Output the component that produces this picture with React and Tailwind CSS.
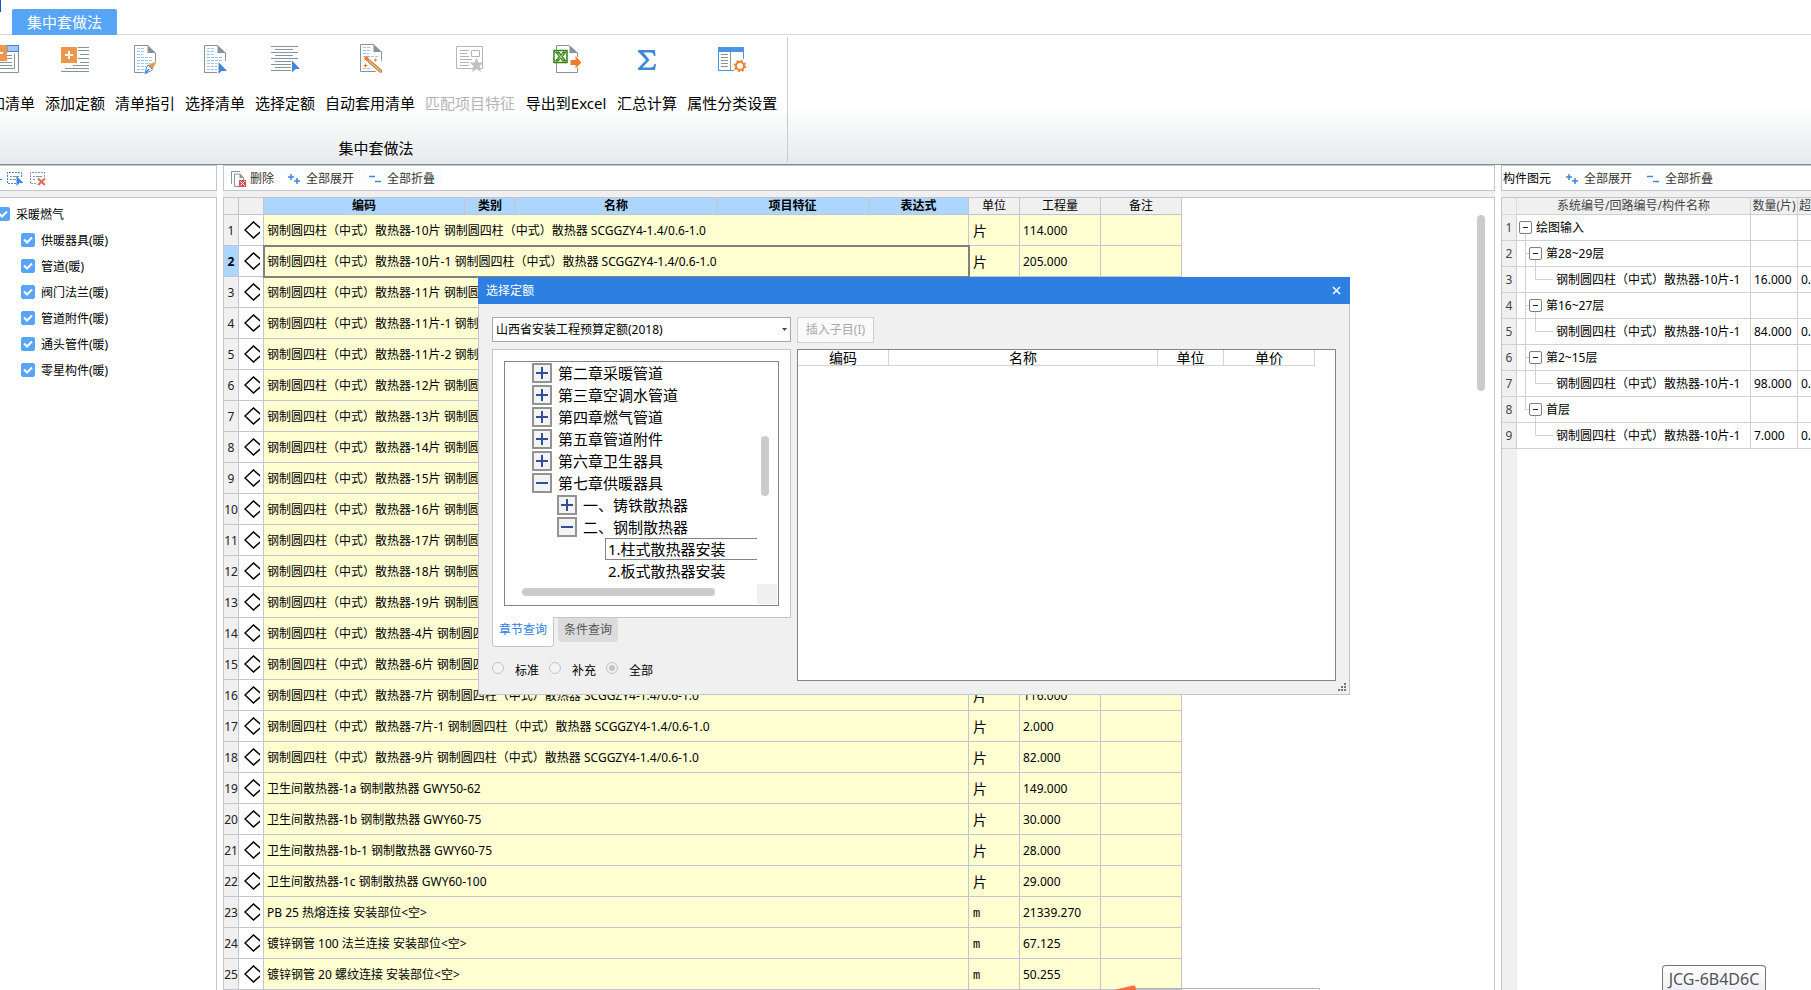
import React, { useState } from 'react';
import clsx from 'clsx';

const RADIATOR = '钢制圆四柱（中式）散热器';
const MODEL = 'SCGGZY4-1.4/0.6-1.0';
const radiator = (suffix) => `${RADIATOR}-${suffix} ${RADIATOR} ${MODEL}`;

const quotaRows = [
  { name: radiator('10片'), unit: '片', amount: '114.000' },
  { name: radiator('10片-1'), unit: '片', amount: '205.000' },
  { name: radiator('11片'), unit: '片', amount: '' },
  { name: radiator('11片-1'), unit: '片', amount: '' },
  { name: radiator('11片-2'), unit: '片', amount: '' },
  { name: radiator('12片'), unit: '片', amount: '' },
  { name: radiator('13片'), unit: '片', amount: '' },
  { name: radiator('14片'), unit: '片', amount: '' },
  { name: radiator('15片'), unit: '片', amount: '' },
  { name: radiator('16片'), unit: '片', amount: '' },
  { name: radiator('17片'), unit: '片', amount: '' },
  { name: radiator('18片'), unit: '片', amount: '' },
  { name: radiator('19片'), unit: '片', amount: '' },
  { name: radiator('4片'), unit: '片', amount: '' },
  { name: radiator('6片'), unit: '片', amount: '' },
  { name: radiator('7片'), unit: '片', amount: '116.000' },
  { name: radiator('7片-1'), unit: '片', amount: '2.000' },
  { name: radiator('9片'), unit: '片', amount: '82.000' },
  { name: '卫生间散热器-1a 钢制散热器 GWY50-62', unit: '片', amount: '149.000' },
  { name: '卫生间散热器-1b 钢制散热器 GWY60-75', unit: '片', amount: '30.000' },
  { name: '卫生间散热器-1b-1 钢制散热器 GWY60-75', unit: '片', amount: '28.000' },
  { name: '卫生间散热器-1c 钢制散热器 GWY60-100', unit: '片', amount: '29.000' },
  { name: 'PB 25 热熔连接 安装部位<空>', unit: 'm', amount: '21339.270' },
  { name: '镀锌钢管 100 法兰连接 安装部位<空>', unit: 'm', amount: '67.125' },
  { name: '镀锌钢管 20 螺纹连接 安装部位<空>', unit: 'm', amount: '50.255' },
];

const elementRows = [
  { level: 0, name: '绘图输入' },
  { level: 1, name: '第28~29层' },
  { level: 2, name: `${RADIATOR}-10片-1`, count: '16.000' },
  { level: 1, name: '第16~27层' },
  { level: 2, name: `${RADIATOR}-10片-1`, count: '84.000' },
  { level: 1, name: '第2~15层' },
  { level: 2, name: `${RADIATOR}-10片-1`, count: '98.000' },
  { level: 1, name: '首层', last: true },
  { level: 2, name: `${RADIATOR}-10片-1`, count: '7.000', last: true },
];

const categories = ['供暖器具(暖)', '管道(暖)', '阀门法兰(暖)', '管道附件(暖)', '通头管件(暖)', '零星构件(暖)'];

const chapters = [
  { name: '第二章采暖管道', level: 0, sign: '+' },
  { name: '第三章空调水管道', level: 0, sign: '+' },
  { name: '第四章燃气管道', level: 0, sign: '+' },
  { name: '第五章管道附件', level: 0, sign: '+' },
  { name: '第六章卫生器具', level: 0, sign: '+' },
  { name: '第七章供暖器具', level: 0, sign: '-' },
  { name: '一、铸铁散热器', level: 1, sign: '+' },
  { name: '二、钢制散热器', level: 1, sign: '-' },
  { name: '1.柱式散热器安装', level: 2, selected: true },
  { name: '2.板式散热器安装', level: 2 },
];

/* Ribbon icons, all on a 30x30 grid */

function RibbonIcon({ children }) {
  return (
    <svg className="h-[30px] w-[30px]" viewBox="0 0 30 30" fill="none" aria-hidden="true">
      {children}
    </svg>
  );
}

function SheetShape() {
  return (
    <>
      <path d="M18 1.500H4.500V28.500H25.500V9" stroke="#87939a" />
      <path d="M17.500 1v8H26z" fill="#87939a" />
      <path
        d="M7 4.500h8M7 7.500h8M7 10.500h6M7 13.500h16M7 16.500h16M7 19.500h16M7 22.500h13M7 25.500h11"
        stroke="#9cc3ee"
        strokeDasharray="3 1"
      />
    </>
  );
}

const AddListIcon = () => (
  <RibbonIcon>
    <path d="M8 1.500h20.500v27H9V25M24.500 10v14.500H8" stroke="#87939a" />
    <path d="M17 1.500h11.500v6H17z" fill="#a5c8f0" stroke="#3f86d9" />
    <path d="M17 11.500h5M17 14.500h5M6 18.500h16M6 21.500h16" stroke="#87939a" />
    <path d="M1 1h16v16H1z" fill="#ee964b" />
    <path d="M5 9h8M9 5v8" stroke="#fff" strokeWidth="2" />
  </RibbonIcon>
);

const AddQuotaIcon = () => (
  <RibbonIcon>
    <path d="M18 3.500h11M18 6.500h11M20 10.500h9M18 14.500h11M20 18.500h9M13 21.500h16M5 24.500h24M1 27.500h28" stroke="#87939a" />
    <path d="M1 3h16v16H1z" fill="#ee964b" />
    <path d="M5 11h8M9 7v8" stroke="#fff" strokeWidth="2" />
  </RibbonIcon>
);

const GuideIcon = () => (
  <RibbonIcon>
    <SheetShape />
    <path d="M27 17l-10 4-4 9h14z" fill="#fff" />
    <path d="M26.500 17.500L18 21l4.500 4.500z" fill="#ee964b" />
    <path d="M18 21l4.500 4.500-2 1.500-5.500 2.500 1.500-6z" fill="#fff" stroke="#3f86d9" />
    <path d="M15 29.500l4-4.500" stroke="#3f86d9" strokeWidth="1.500" />
  </RibbonIcon>
);

const PickListIcon = () => (
  <RibbonIcon>
    <SheetShape />
    <path d="M17 17v13h10V17z" fill="#fff" />
    <path d="M18.500 18v12l3-3h5.500z" fill="#3f86d9" />
  </RibbonIcon>
);

const PickQuotaIcon = () => (
  <RibbonIcon>
    <path d="M1 2.500h27M5 5.500h18M1 8.500h27M5 11.500h18M1 14.500h27M5 17.500h16M1 20.500h20M5 23.500h16M1 26.500h20" stroke="#87939a" />
    <path d="M21 15v12h7v-9l-3-3z" fill="#fff" />
    <path d="M22 16.500v12l3.500-3.500H30z" fill="#3f86d9" />
  </RibbonIcon>
);

const WandIcon = () => (
  <RibbonIcon>
    <g transform="translate(1 -1)">
      <SheetShape />
      <path d="M7 14v9h5l10 7h5v-8l-3-8z" fill="#fff" />
      <path d="M13 18l11.500 10" stroke="#b9773a" strokeWidth="3.500" strokeLinecap="round" />
      <path d="M13 18l11.500 10" stroke="#f5bd85" strokeWidth="1.500" strokeLinecap="round" />
      <path d="M10.500 13v5M8 15.500h5M8.500 13.500l4 4M12.500 13.500l-4 4M19.500 15.500v3M18 17h3M9.500 20.500v4M7.500 22.500h4" stroke="#ee7a2c" />
    </g>
  </RibbonIcon>
);

const MatchIcon = () => (
  <RibbonIcon>
    <path d="M1.500 2.500h26v22h-26zM16.500 6.500h8v6h-8z" stroke="#b4b4b4" />
    <path d="M5 6.500h9M5 9.500h7M5 12.500h9M5 15.500h12M5 18.500h9M5 21.500h9" stroke="#b4b4b4" />
    <path d="M21.500 13.500l2 5h5l-4 3.500 1.500 6-4.500-3-4.500 3 1.500-6-4-3.500h5z" fill="#c0c0c0" />
  </RibbonIcon>
);

const ExcelIcon = () => (
  <RibbonIcon>
    <path d="M18 1.500H5.500V28.500H26.500V24M26.500 13V9" stroke="#87939a" />
    <path d="M18.500 1v8H27z" fill="#87939a" />
    <path d="M3 6.500h13v12H3z" fill="#fff" stroke="#2f8011" strokeWidth="1.500" />
    <path d="M4.500 8h3.500l2 3 2-3H15l-3.500 4.500L15 17h-3.500l-2-3-2 3h-3L8 12.500z" fill="#4f9a2c" stroke="#2f8011" />
    <path d="M7 9.500l5 6M12.500 9.500l-5 6" stroke="#b8e39a" />
    <path d="M19.500 16h5v-4l6 6.500-6 6V21h-5z" fill="#f07d28" />
  </RibbonIcon>
);

const SumIcon = () => (
  <RibbonIcon>
    <path d="M6 6h17l.5 6H22c-.5-2.500-1.500-3.500-4-3.500h-6.500l6 7.500-7 7.500H18c3 0 4-1 4.500-3.500H24l-1 6H6v-1.500l8-8.500L6 7.500z" fill="#4187d8" />
  </RibbonIcon>
);

const AttributeIcon = () => (
  <RibbonIcon>
    <path d="M17 26.500H1.500V3.500h25V15" stroke="#4f93e3" />
    <path d="M1 3h26v5H1z" fill="#4f93e3" />
    <path d="M13.500 8v18M4 10.500h7M4 13.500h7M4 16.500h7M4 19.500h7M4 22.500h7" stroke="#87939a" />
    <circle cx="23" cy="22" r="5.500" stroke="#f07d28" strokeWidth="1.500" strokeDasharray="2 2.320" />
    <circle cx="23" cy="22" r="4" stroke="#f07d28" strokeWidth="2" />
  </RibbonIcon>
);

const ribbonActions = [
  { label: '添加清单', Icon: AddListIcon },
  { label: '添加定额', Icon: AddQuotaIcon },
  { label: '清单指引', Icon: GuideIcon },
  { label: '选择清单', Icon: PickListIcon },
  { label: '选择定额', Icon: PickQuotaIcon },
  { label: '自动套用清单', Icon: WandIcon },
  { label: '匹配项目特征', Icon: MatchIcon, disabled: true },
  { label: '导出到Excel', Icon: ExcelIcon },
  { label: '汇总计算', Icon: SumIcon },
  { label: '属性分类设置', Icon: AttributeIcon },
];

function Ribbon() {
  return (
    <header className="shrink-0 overflow-hidden">
      <div className="flex h-[35px] items-end border-b border-[#d9d9d9]">
        <span className="h-3 w-px self-start bg-[#1d50c0]" />
        <button className="ml-[11px] h-[26px] w-[105px] -mb-px rounded-t-xs bg-[#57a5f7] text-[15px] leading-[26px] text-white">
          集中套做法
        </button>
      </div>
      <div className="flex border-b border-[#868a94] bg-linear-to-b from-white from-55% to-[#e7eaeb]">
        <section className="relative -ml-8 pt-[9px] pr-[11px] pb-[5px] pl-[7px] text-[15px] leading-[22px]">
          <div className="flex gap-[10px]">
            {ribbonActions.map(({ label, Icon, disabled }) => (
              <button
                key={label}
                disabled={disabled}
                className={clsx(
                  'flex min-w-[60px] shrink-0 flex-col items-center gap-[18px] whitespace-nowrap',
                  disabled ? 'text-[#b4b4b4]' : 'text-black',
                  label === '导出到Excel' && 'w-[82px]'
                )}
              >
                <Icon />
                <span>{label}</span>
              </button>
            ))}
          </div>
          <h2 className="mt-[23px] text-center">集中套做法</h2>
          <span className="absolute top-0.5 right-0 bottom-0.5 w-px bg-[#c9cbcc]" />
        </section>
      </div>
    </header>
  );
}

/* Toolbar bits */

function ToolButton({ children, className }) {
  return (
    <button className={clsx('flex h-[22px] items-center rounded-sm border border-[#fafafa] whitespace-nowrap text-[#333]', className)}>
      {children}
    </button>
  );
}

function ExpandCollapse() {
  return (
    <>
      <ToolButton className="gap-1.5 px-[5px]">
        <svg className="h-3 w-3" viewBox="0 0 12 12" stroke="#3f86d9" strokeWidth="1.500" aria-hidden="true">
          <path d="M0 4h6M3 1v6M6 8h6M9 5v6" />
        </svg>
        全部展开
      </ToolButton>
      <ToolButton className="gap-1.5 px-[5px]">
        <svg className="h-3 w-3" viewBox="0 0 12 12" stroke="#3f86d9" strokeWidth="1.500" aria-hidden="true">
          <path d="M0 3.500h6M6 8.500h6" />
        </svg>
        全部折叠
      </ToolButton>
    </>
  );
}

function Toolbar({ children, className }) {
  return (
    <div className={clsx('flex h-[26px] shrink-0 items-center gap-[3px] border-y border-[#c3c6d0] bg-white pt-0.5', className)}>
      {children}
    </div>
  );
}

function CheckRow({ label, className }) {
  return (
    <label className={clsx('flex h-[26px] items-center gap-1.5', className)}>
      <span className="grid">
        <input type="checkbox" defaultChecked className="peer col-start-1 row-start-1 h-3.5 w-3.5 appearance-none rounded-xs border border-[#57a5f7] checked:bg-[#57a5f7]" />
        <svg className="pointer-events-none invisible col-start-1 row-start-1 h-3.5 w-3.5 peer-checked:visible" viewBox="0 0 14 14" fill="none" stroke="#fff" strokeWidth="2" aria-hidden="true">
          <path d="M3 6.500l3 3 5-5" />
        </svg>
      </span>
      <span className="pt-0.5">{label}</span>
    </label>
  );
}

function CategoryPanel() {
  return (
    <aside className="flex w-[217px] shrink-0 flex-col bg-[#f0f0f0]">
      <Toolbar className="border-r">
        <span className="h-px w-0.5 bg-[#3f86d9]" />
        <ToolButton className="px-px">
          <svg className="h-4 w-4" viewBox="0 0 16 16" fill="none" aria-hidden="true">
            <path d="M14.500 6V1.500H.5v11H9" stroke="#3f86d9" strokeDasharray="2 1" />
            <path d="M3 5.500h2M6 5.500h6M3 8.500h2M6 8.500h3" stroke="#87939a" />
            <path d="M9.500 5v10l3-3h4z" fill="#3f86d9" />
          </svg>
        </ToolButton>
        <ToolButton className="px-px">
          <svg className="h-4 w-4" viewBox="0 0 16 16" fill="none" aria-hidden="true">
            <path d="M14.500 6V1.500H.5v11H7" stroke="#87939a" strokeDasharray="2 1" />
            <path d="M3 5.500h2M6 5.500h6M3 8.500h2" stroke="#87939a" />
            <path d="M8 7.500l7 6.500M15 7.500L8 14" stroke="#dc6a4e" strokeWidth="2" />
          </svg>
        </ToolButton>
      </Toolbar>
      <div className="mt-1.5 flex-1 border-t border-r border-[#c3c6d0] bg-white pt-[3px]">
        <CheckRow label="采暖燃气" className="-ml-1" />
        {categories.map((name) => (
          <CheckRow key={name} label={name} className="ml-[21px]" />
        ))}
      </div>
    </aside>
  );
}

const headCell = 'border-r border-b border-[#c3c6d0] p-0 text-center';
const yellowCell = 'border-r border-b border-[#c3c6d0] bg-[#ffffd2] p-0 pt-0.5';

function QuotaTable() {
  const [selected] = useState(1);

  return (
    <table className="w-[958px] table-fixed border-separate border-spacing-0">
      <colgroup>
        <col className="w-[15px]" />
        <col className="w-[25px]" />
        <col className="w-[201px]" />
        <col className="w-[51px]" />
        <col className="w-[201px]" />
        <col className="w-[152px]" />
        <col className="w-[100px]" />
        <col className="w-[51px]" />
        <col className="w-[81px]" />
        <col className="w-[81px]" />
      </colgroup>
      <thead>
        <tr className="h-[17px] leading-4">
          <th className={clsx(headCell, 'bg-[#f0f0f0]')} />
          <th className={clsx(headCell, 'bg-[#f0f0f0]')} />
          {['编码', '类别', '名称', '项目特征', '表达式'].map((title) => (
            <th key={title} className={clsx(headCell, 'bg-[#add6ff] font-bold')}>{title}</th>
          ))}
          {['单位', '工程量', '备注'].map((title) => (
            <th key={title} className={clsx(headCell, 'bg-[#f0f0f0] font-normal')}>{title}</th>
          ))}
        </tr>
      </thead>
      <tbody>
        {quotaRows.map((row, index) => (
          <tr key={row.name} className="h-[31px]">
            <th className={clsx(headCell, 'pt-0.5', index === selected ? 'bg-[#add6ff] font-bold' : 'bg-[#f0f0f0] font-normal text-[#222]')}>
              {index + 1}
            </th>
            <td className="border-r border-b border-[#c3c6d0] p-0 pl-[5px]">
              <svg className="h-[18px] w-4" viewBox="0 0 16 18" fill="none" stroke="#000" strokeWidth="1.500" aria-hidden="true">
                <path d="M18.500 9L9.500 1 1 9l8.500 8z" />
              </svg>
            </td>
            <td
              colSpan={5}
              className={clsx(
                yellowCell,
                'pl-[3px] whitespace-nowrap',
                index === selected && 'outline-2 -outline-offset-1 outline-[#808080]'
              )}
            >
              {row.name}
            </td>
            <td className={clsx(yellowCell, 'pl-1', row.unit === '片' ? 'text-sm' : 'pt-1 font-mono')}>{row.unit}</td>
            <td className={clsx(yellowCell, 'pl-[3px]')}>{row.amount}</td>
            <td className={yellowCell} />
          </tr>
        ))}
      </tbody>
    </table>
  );
}

function QuotaPanel() {
  return (
    <main className="flex min-w-0 flex-1 flex-col bg-[#f0f0f0]">
      <Toolbar className="border-x pl-0.5">
        <ToolButton className="gap-1 px-1">
          <svg className="h-4 w-[15px]" viewBox="0 0 15 16" fill="none" aria-hidden="true">
            <path d="M.5 13V.5H9M8 15.500H3.500V3H9l3.500 3.500V9" stroke="#87939a" />
            <path d="M8.500 3v4h4z" fill="#87939a" />
            <path d="M8 9h7v7H8z" fill="#d65353" />
            <path d="M9.500 10.500l4 4M13.500 10.500l-4 4" stroke="#fff" />
          </svg>
          删除
        </ToolButton>
        <ExpandCollapse />
      </Toolbar>
      <div className="mt-1.5 flex min-h-0 flex-1 items-start justify-between overflow-hidden border border-b-0 border-[#c3c6d0] bg-white">
        <QuotaTable />
        <span className="mt-[17px] mr-[9px] h-[176px] w-2 rounded-full bg-[#cbcbcb]" />
      </div>
    </main>
  );
}

/* Branch lines and the collapse box in front of a tree row */
function TreeBranch({ level, last }) {
  return (
    <svg
      className={clsx('h-[26px] shrink-0', level === 0 && 'w-[18px]', level === 1 && 'w-7', level === 2 && 'w-[38px]')}
      viewBox={level === 0 ? '0 0 18 26' : level === 1 ? '0 0 28 26' : '0 0 38 26'}
      fill="none"
      aria-hidden="true"
    >
      {level === 0 && <path d="M8.500 19v7" stroke="#d2d2d2" />}
      {level === 1 && <path d={last ? 'M8.500 0v12.500H12M18.500 19v7' : 'M8.500 0v26M8.500 12.500H12M18.500 19v7'} stroke="#d2d2d2" />}
      {level === 2 && <path d={last ? 'M18.500 0v12.500H36' : 'M8.500 0v26M18.500 0v12.500H36'} stroke="#d2d2d2" />}
      {level < 2 && (
        <g transform={level === 1 ? 'translate(10 0)' : undefined}>
          <rect x="2.500" y="6.500" width="12" height="12" rx="1.500" fill="#fff" stroke="#808080" />
          <path d="M6 12.500h5" stroke="#222" />
        </g>
      )}
    </svg>
  );
}

function ElementPanel() {
  return (
    <aside className="flex w-[310px] shrink-0 flex-col overflow-hidden bg-[#f0f0f0]">
      <Toolbar className="border-l">
        <span className="mr-1.5 ml-px whitespace-nowrap">构件图元</span>
        <ExpandCollapse />
      </Toolbar>
      <div className="mt-1.5 flex flex-1 flex-col border-t border-l border-[#c3c6d0] bg-white">
        <table className="w-[336px] table-fixed border-separate border-spacing-0">
          <colgroup>
            <col className="w-[15px]" />
            <col className="w-[234px]" />
            <col className="w-[47px]" />
            <col className="w-10" />
          </colgroup>
          <thead>
            <tr className="h-[17px] bg-[#f0f0f0] leading-4 whitespace-nowrap text-[#444]">
              <th className="border-r border-b border-[#dcdcdc] p-0" />
              <th className="border-r border-b border-[#d0d0d0] p-0 text-center font-normal">系统编号/回路编号/构件名称</th>
              <th className="border-r border-b border-[#d0d0d0] p-0 text-center font-normal">数量(片)</th>
              <th className="border-b border-[#d0d0d0] p-0 pl-px text-left font-normal">超高</th>
            </tr>
          </thead>
          <tbody>
            {elementRows.map((row, index) => (
              <tr key={index} className="h-[26px]">
                <th className="border-r border-b border-[#d0d0d0] bg-[#f0f0f0] p-0 text-center font-normal text-[#444]">{index + 1}</th>
                <td className="border-r border-b border-[#d0d0d0] p-0">
                  <div className="-my-px flex items-center gap-px whitespace-nowrap">
                    <TreeBranch level={row.level} last={row.last} />
                    {row.name}
                  </div>
                </td>
                <td className="border-r border-b border-[#d0d0d0] p-0 pl-[3px]">{row.count}</td>
                <td className="border-b border-[#d0d0d0] p-0 pl-[3px]">{row.count && '0.000'}</td>
              </tr>
            ))}
          </tbody>
        </table>
        <div className="w-[15px] flex-1 bg-[#f0f0f0]" />
      </div>
    </aside>
  );
}

/* Quota picker dialog */

function ChapterRow({ name, level, sign, selected }) {
  return (
    <li
      className={clsx(
        'flex h-[22px] items-center gap-1.5 whitespace-nowrap',
        level === 0 && 'ml-[26px]',
        level === 1 && 'ml-[51px]',
        level === 2 && 'ml-[99px] border-y border-l pl-0.5',
        selected ? 'border-[#82858f]' : 'border-transparent'
      )}
    >
      {sign && (
        <svg className="h-5 w-5" viewBox="0 0 20 20" fill="none" aria-hidden="true">
          <rect x="1" y="1" width="18" height="18" fill="#f3f3f3" stroke="#939393" strokeWidth="2" />
          <path d="M4 10h12" stroke="#2f4f9b" strokeWidth="2" />
          {sign === '+' && <path d="M10 4v12" stroke="#2f4f9b" strokeWidth="2" />}
        </svg>
      )}
      {name}
    </li>
  );
}

function QuotaDialog() {
  const [scope, setScope] = useState('全部');

  return (
    <div role="dialog" aria-label="选择定额" className="absolute top-[277px] left-[478px] w-[872px] bg-[#f0f0f0]">
      <div className="flex h-[27px] items-center justify-between bg-[#2d80e2] pr-[9px] pl-2 text-white">
        <span>选择定额</span>
        <button aria-label="关闭">
          <svg className="h-[9px] w-[9px]" viewBox="0 0 9 9" stroke="#fff" strokeWidth="1.500" aria-hidden="true">
            <path d="M1 1l7 7M8 1l-7 7" />
          </svg>
        </button>
      </div>

      <div className="relative flex gap-1.5 border-x border-b border-[#c3c6d0] p-[13px]">
        <div className="w-[299px] shrink-0">
          <div className="grid">
            <select aria-label="定额库" className="col-start-1 row-start-1 h-[25px] w-full appearance-none border border-[#a9a9a9] bg-white pl-[3px]">
              <option>山西省安装工程预算定额(2018)</option>
            </select>
            <svg className="pointer-events-none col-start-1 row-start-1 mr-1 h-[3px] w-[5px] self-center justify-self-end" viewBox="0 0 5 3" aria-hidden="true">
              <path d="M0 0h5L2.500 3z" fill="#444" />
            </svg>
          </div>

          <div className="mt-[7px] border border-[#c3c6d0] bg-white p-[11px]">
            <div className="h-[245px] border border-[#82858f] px-px">
              <div className="flex">
                <ul className="min-w-0 flex-1 text-[15px] leading-5">
                  {chapters.map((chapter) => (
                    <ChapterRow key={chapter.name} {...chapter} />
                  ))}
                </ul>
                <div className="w-5 shrink-0 pt-[74px] pl-1">
                  <div className="h-[60px] w-2 rounded-full bg-[#cbcbcb]" />
                </div>
              </div>
              <div className="mt-0.5 flex items-center justify-between pl-4">
                <div className="mb-1 h-2 w-[193px] rounded-full bg-[#cbcbcb]" />
                <div className="h-5 w-5 bg-[#f0f0f0]" />
              </div>
            </div>
          </div>

          <div className="flex items-start gap-1">
            <button className="-mt-px h-[30px] w-[62px] rounded-b-sm border border-t-0 border-[#c3c6d0] bg-white pb-1 text-[#2d80e2]">章节查询</button>
            <button className="h-6 w-[60px] rounded-b-sm bg-[#dcdcdc] text-[#555]">条件查询</button>
          </div>

          <div className="mt-[15px] flex h-[19px]">
            {['标准', '补充', '全部'].map((item) => (
              <label key={item} className="flex w-[57px] items-start gap-[11px]">
                <input
                  type="radio"
                  name="scope"
                  checked={scope === item}
                  onChange={() => setScope(item)}
                  className="h-3 w-3 appearance-none rounded-full border border-[#c4c4c4] bg-[#f4f4f4] p-0.5 checked:bg-[#c4c4c4] checked:bg-clip-content"
                />
                <span className="pt-0.5 leading-3.5">{item}</span>
              </label>
            ))}
          </div>
        </div>

        <div className="flex min-w-0 flex-1 flex-col items-start">
          <button disabled className="h-[26px] w-[77px] border border-[#cfcfd4] bg-[#fafafa] text-[#a9a9a9]">插入子目(I)</button>
          <div className="mt-1.5 w-full flex-1 border border-[#82858f] bg-white">
            <table className="w-[517px] table-fixed border-separate border-spacing-0 text-sm">
              <colgroup>
                <col className="w-[91px]" />
                <col className="w-[269px]" />
                <col className="w-[66px]" />
                <col className="w-[91px]" />
              </colgroup>
              <thead>
                <tr className="h-4 leading-[15px]">
                  {['编码', '名称', '单位', '单价'].map((title) => (
                    <th key={title} className="border-r border-b border-[#d4d4d8] p-0 text-center font-normal">{title}</th>
                  ))}
                </tr>
              </thead>
            </table>
          </div>
        </div>

        <svg className="absolute right-[3px] bottom-[3px] h-2 w-2" viewBox="0 0 8 8" fill="#777" aria-hidden="true">
          <path d="M6 0h2v2H6zM3 3h2v2H3zM6 3h2v2H6zM0 6h2v2H0zM3 6h2v2H3zM6 6h2v2H6z" />
        </svg>
      </div>
    </div>
  );
}

export default function App() {
  return (
    <div className="relative flex h-screen flex-col overflow-hidden bg-white font-['Noto_Sans','Noto_Sans_CJK_SC',sans-serif] text-xs text-black">
      <Ribbon />
      <div className="flex min-h-0 flex-1 gap-1.5">
        <CategoryPanel />
        <QuotaPanel />
        <ElementPanel />
      </div>

      <QuotaDialog />

      {/* Top edges of the windows docked below */}
      <svg className="absolute bottom-0 left-[1114px] h-[5px] w-[206px]" viewBox="0 0 206 5" fill="none" aria-hidden="true">
        <path d="M20 3.500h185.500V5" stroke="#b0b0b4" />
        <path d="M0 5L19 .5q3-.5 3 4.500z" fill="#fb6d3a" />
      </svg>
      <div className="absolute right-[45px] bottom-0 h-[25px] w-[104px] rounded-t-sm border border-b-0 border-[#767676] bg-linear-to-b from-white to-[#eff0f7] text-center text-base leading-[26px] text-[#555]">
        JCG-6B4D6C
      </div>
    </div>
  );
}
